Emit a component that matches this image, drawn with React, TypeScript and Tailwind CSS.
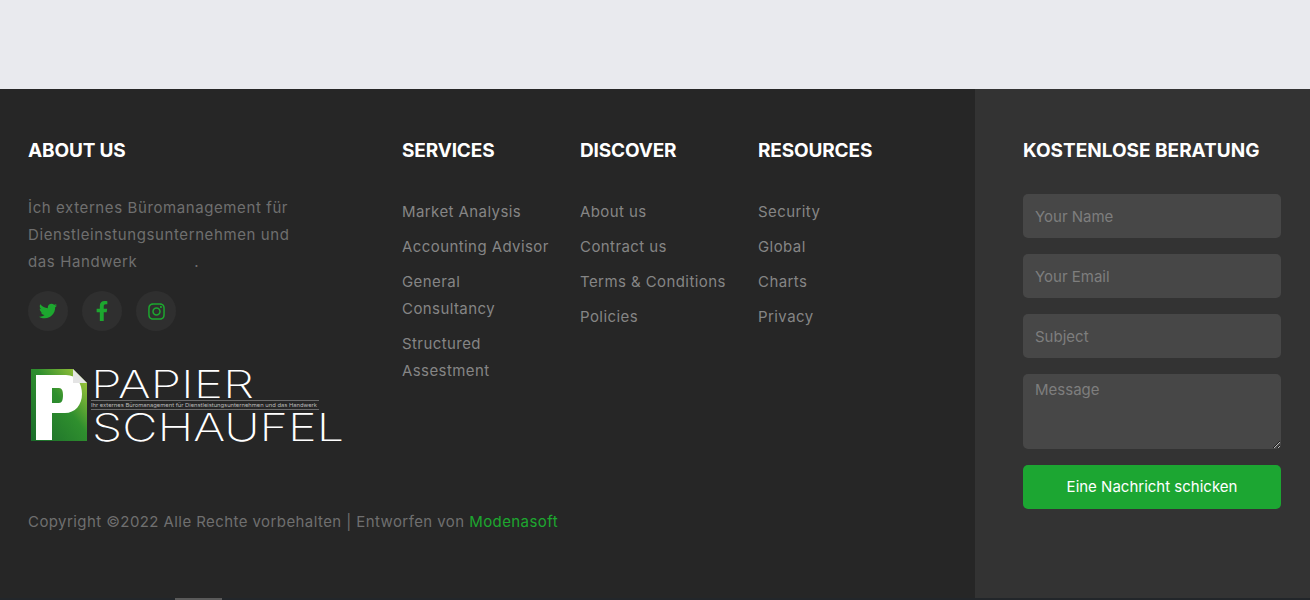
import { FaTwitter, FaFacebookF, FaInstagram } from 'react-icons/fa'

const columns = [
  { title: 'SERVICES', links: ['Market Analysis', 'Accounting Advisor', 'General Consultancy', 'Structured Assestment'] },
  { title: 'DISCOVER', links: ['About us', 'Contract us', 'Terms & Conditions', 'Policies'] },
  { title: 'RESOURCES', links: ['Security', 'Global', 'Charts', 'Privacy'] },
]

function Logo() {
  return (
    <svg width="320" height="92" viewBox="0 -6 320 92" className="block">
      <defs>
        <linearGradient id="leaf" x1="0" y1="1" x2="1" y2="0">
          <stop offset="0" stopColor="#1a6b2a" />
          <stop offset="0.55" stopColor="#2f8f2e" />
          <stop offset="1" stopColor="#b3cf3c" />
        </linearGradient>
      </defs>
      <path d="M3 3H45L59 17V75H3Z" fill="url(#leaf)" />
      <path d="M8 9H38C49 9 54 18 54 28C54 39 47 47 37 47H24V74H8ZM24 22V37H31C34 37 35 34 35 29C35 25 34 22 31 22Z" fill="#fff" fillRule="evenodd" />
      <path d="M45 3L59 17H45Z" fill="#e4e4e4" />
      <text x="63" y="32" fontFamily="Inter, sans-serif" fontWeight="200" fontSize="38" fill="#fff" textLength="163" lengthAdjust="spacingAndGlyphs">PAPIER</text>
      <path d="M63 34.5H291M63 43.5H291" stroke="#8a8a8a" strokeWidth="0.7" />
      <text x="63" y="41" fontFamily="Inter, sans-serif" fontSize="5" fill="#bbb" textLength="226" lengthAdjust="spacingAndGlyphs">Ihr externes Büromanagement für Dienstleistungsunternehmen und das Handwerk</text>
      <text x="64" y="75" fontFamily="Inter, sans-serif" fontWeight="200" fontSize="38" fill="#fff" textLength="252" lengthAdjust="spacingAndGlyphs">SCHAUFEL</text>
    </svg>
  )
}

export default function App() {
  return (
    <div className="h-[600px] overflow-hidden bg-[#e9eaee] pt-[89px] font-['Inter',sans-serif]">
      <footer className="flex h-[509px] bg-[#262626]">
        <div className="w-[975px] shrink-0 pl-[28px] pt-[50px]">
          <div className="flex h-[383px]">
            {/* About */}
            <div className="w-[374px]">
              <h4 className="text-[19px] leading-[24px] font-bold tracking-[-0.15px] text-white">ABOUT US</h4>
              <p className="mt-[31px] w-[280px] text-[15px] leading-[27px] tracking-[0.6px] text-[#6f6f6f]">
                İch externes Büromanagement für Dienstleinstungsunternehmen und das Handwerk <span className="ml-[52px]">.</span>
              </p>
              <div className="mt-[16px] flex gap-[14px]">
                <a className="flex h-[40px] w-[40px] items-center justify-center rounded-full bg-[#2f2f2f] text-[18px] text-[#1da72f]"><FaTwitter /></a>
                <a className="flex h-[40px] w-[40px] items-center justify-center rounded-full bg-[#2f2f2f] text-[20px] text-[#1da72f]"><FaFacebookF /></a>
                <a className="flex h-[40px] w-[40px] items-center justify-center rounded-full bg-[#2f2f2f] text-[19px] text-[#1da72f]"><FaInstagram /></a>
              </div>
              <div className="mt-[29px]"><Logo /></div>
            </div>
            {/* Link columns */}
            {columns.map((col) => (
              <div key={col.title} className="w-[178px]">
                <h4 className="text-[19px] leading-[24px] font-bold tracking-[-0.15px] text-white">{col.title}</h4>
                <ul className="mt-[35px] flex w-[150px] flex-col gap-[8px]">
                  {col.links.map((l) => (
                    <li key={l} className="text-[15px] leading-[27px] tracking-[0.42px] text-[#858585]">{l}</li>
                  ))}
                </ul>
              </div>
            ))}
          </div>
          <p className="-mt-[12px] text-[15px] leading-[24px] tracking-[0.42px] text-[#6f6f6f]">
            Copyright ©2022 Alle Rechte vorbehalten | Entworfen von <a className="text-[#1da72f]">Modenasoft</a>
          </p>
        </div>
        {/* Contact form */}
        <div className="w-[335px] shrink-0 bg-[#333333] pl-[48px] pr-[29px] pt-[50px]">
          <h4 className="text-[19px] leading-[24px] font-bold whitespace-nowrap text-white">KOSTENLOSE BERATUNG</h4>
          <form className="mt-[31px] flex flex-col gap-[16px]">
            <input placeholder="Your Name" className="h-[44px] w-full rounded-[5px] bg-[#474747] px-[12px] text-[15px] placeholder:text-[#7e7e7e]" />
            <input placeholder="Your Email" className="h-[44px] w-full rounded-[5px] bg-[#474747] px-[12px] text-[15px] placeholder:text-[#7e7e7e]" />
            <input placeholder="Subject" className="h-[44px] w-full rounded-[5px] bg-[#474747] px-[12px] text-[15px] placeholder:text-[#7e7e7e]" />
            <textarea placeholder="Message" className="block h-[75px] w-full rounded-[5px] bg-[#474747] px-[12px] py-[5px] text-[15px] placeholder:text-[#7e7e7e]" />
            <button type="button" className="h-[44px] w-full rounded-[5px] bg-[#1ca632] text-[15px] text-white">Eine Nachricht schicken</button>
          </form>
        </div>
      </footer>
      {/* Start of the next section, just visible at the page edge */}
      <div className="h-[2px] bg-[#22262a] pl-[175px]">
        <div className="h-full w-[47px] bg-[#5a5a5a]" />
      </div>
    </div>
  )
}
